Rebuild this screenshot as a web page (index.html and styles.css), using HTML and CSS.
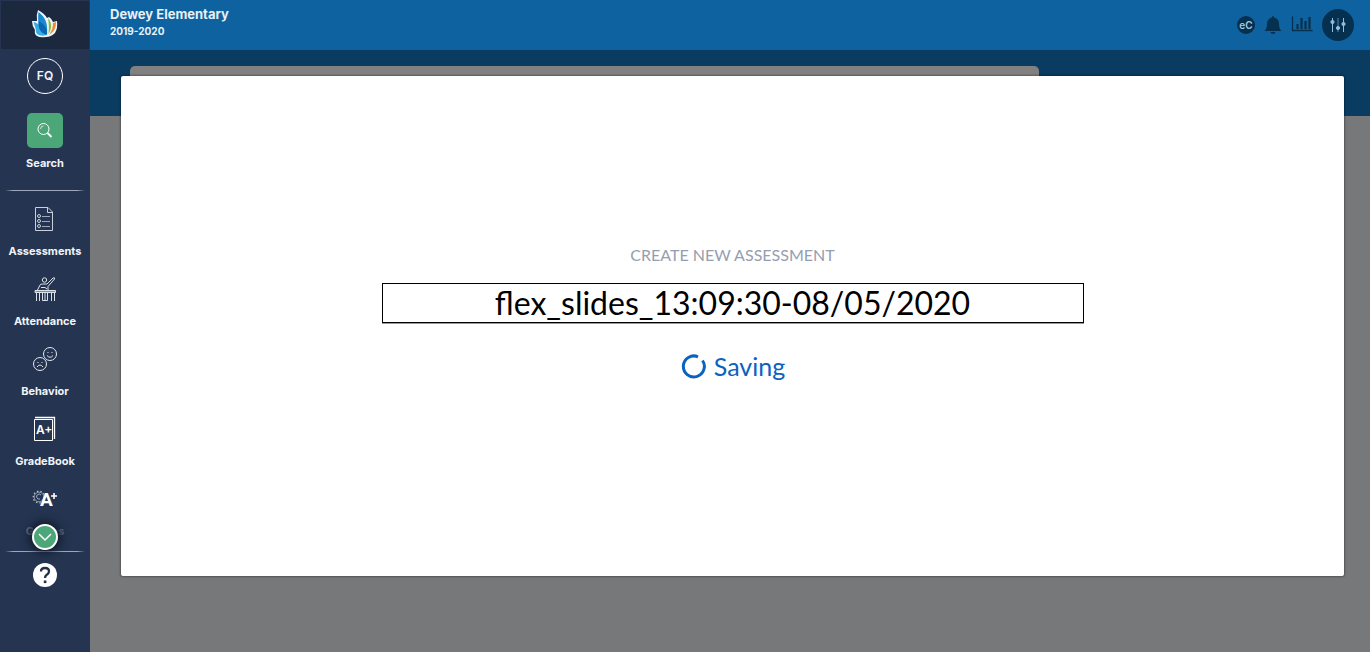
FILE: index.html
```html
<!DOCTYPE html>
<html lang="en">
<head>
<meta charset="utf-8">
<title>Create New Assessment</title>
<meta name="viewport" content="width=device-width, initial-scale=1">
<link rel="stylesheet" href="styles.css">
</head>
<body>
<aside class="sidebar">
  <a class="logo" href="#" aria-label="Home">
    <svg width="26" height="28" viewBox="0 0 26 28">
      <path d="M6 0Q12 3 15 8L17 7Q20 9 21 12L25 11Q26 18 23 23Q19 27 14 27Q8 28 5 26Q2 24 3 20Q0 16 0 11L5 11Q4 5 6 0Z" fill="#eef5fa"/>
      <path d="M6.500 2C13 7 16 13 15 24C8 21 5 13 6.500 2Z" fill="#1689d0"/>
      <path d="M1.500 12C8 14 13 18 14.500 25C8 27 3 24 4 20Z" fill="#35aee6"/>
      <path d="M6.500 11C12 14 16 19 15 25C8 23 6 18 6.500 11Z" fill="#0b65b2"/>
      <path d="M16 8C20 12 20 19 16.500 24C17 18 17 13 16 8Z" fill="#86bd40"/>
      <path d="M24 12C24 18 22 22 17 25C20 21 21 17 21 13Z" fill="#f18a32"/>
    </svg>
  </a>
  <button class="avatar" type="button">FQ</button>
  <button class="search" type="button">
    <span class="search-icon">
      <svg width="16" height="16" viewBox="0 0 16 16" fill="none" stroke="#fff"><circle cx="6.500" cy="6" r="5.500"/><path d="M3.500 6a3 3 0 0 1 3-3" stroke-width=".7"/><path d="M10.500 10L14.500 14" stroke-width="1.800"/></svg>
    </span>
    <span>Search</span>
  </button>
  <nav class="menu">
    <a class="item" href="#">
      <svg width="24" height="26" viewBox="0 0 24 26" fill="none" stroke="#c9d0db"><path d="M2.500 1.500H15L19.500 6V24.500H2.500Z M14.500 1.500V6.500H19.500"/><circle cx="6" cy="10" r="1.500"/><circle cx="6" cy="15" r="1.500"/><circle cx="6" cy="20" r="1.500"/><path d="M9 10.500H17M9 15.500H17M9 20.500H17" stroke="#9da8ba"/></svg>
      <span>Assessments</span>
    </a>
    <a class="item" href="#">
      <svg width="24" height="26" viewBox="0 0 24 26" fill="none" stroke="#dde2ea"><circle cx="11.500" cy="4" r="2.200"/><path d="M4.500 14L7 9Q7.500 8 9.500 8H14L20 2Q22 1 21.500 3L15 10.500V14M8 11.500H12L14 13"/><path d="M2 14.500H22.500V16.500H2Z" fill="#7f8ca3"/><path d="M3.500 17V25M6.500 17V25M18.500 17V25M21.500 17V25M9.500 17V24.500H14.500V17M12 17V24"/></svg>
      <span>Attendance</span>
    </a>
    <a class="item" href="#">
      <svg width="26" height="26" viewBox="0 0 26 26" fill="none" stroke="#e4e8ef"><circle cx="18" cy="8" r="6.500"/><circle cx="8" cy="18" r="6.500"/><path d="M15 9.500Q18 13 21 9.500M5 21Q8 17 11 21"/><path d="M15.500 6.500H16.500M19.500 6.500H20.500M5.500 16.500H6.500M9.500 16.500H10.500"/></svg>
      <span>Behavior</span>
    </a>
    <a class="item" href="#">
      <svg width="24" height="26" viewBox="0 0 24 26" fill="none" stroke="#fff"><path d="M1.500 3.500H19.500V24.500H1.500Z"/><path d="M2 1.500H21.500V23" stroke-width="1.300"/><text class="grade-mark" x="3" y="18">A+</text></svg>
      <span>GradeBook</span>
    </a>
    <a class="item" href="#">
      <svg width="26" height="26" viewBox="0 0 26 26" fill="none" stroke="#b3bdcc"><circle cx="7" cy="11" r="5.800" stroke-width="1.300" stroke-dasharray="1.500 2"/><circle cx="7" cy="11" r="4.800" stroke-width=".7"/><path d="M9 9A2.500 2.500 0 1 0 8 13" stroke-width=".9"/><text class="grades-mark" x="8" y="20">A</text><path d="M22 7V13M19 10H25" stroke="#fff" stroke-width="1.600"/></svg>
      <span class="faded">Grades</span>
    </a>
    <button class="more" type="button" aria-label="Show more">
      <svg width="16" height="10" viewBox="0 0 16 10" fill="none" stroke="#fff" stroke-width="1.500"><path d="M2 2L8 8L14 2"/></svg>
    </button>
  </nav>
  <a class="help" href="#" aria-label="Help">
    <svg width="24" height="24" viewBox="0 0 24 24"><circle cx="12" cy="12" r="12" fill="#fff"/><path d="M8 8.500Q8 5 12 5Q16 5 16 8.500Q16 10.500 13.500 12Q12 13 12 15" fill="none" stroke="#20304c" stroke-width="2.300"/><rect x="10.800" y="17.500" width="2.600" height="2.600" fill="#20304c"/></svg>
  </a>
</aside>
<div class="page">
  <header class="topbar">
    <div class="school"><div class="school-name">Dewey Elementary</div><div class="school-year">2019-2020</div></div>
    <div class="tools">
      <button class="ec" type="button">eC</button>
      <button type="button" aria-label="Notifications"><svg width="18" height="20" viewBox="0 0 18 20" fill="#06304f"><path d="M9 1Q10 1 10 2.500Q15 3.500 15 9Q15 14 17.500 16H.500Q3 14 3 9Q3 3.500 8 2.500Q8 1 9 1ZM6.500 17H11.500Q11 19 9 19Q7 19 6.500 17Z"/></svg></button>
      <button type="button" aria-label="Reports"><svg width="22" height="18" viewBox="0 0 22 18" fill="none" stroke="#06304f"><path d="M1.500 .500V14.500H21.500" stroke-width="1.300"/><path d="M6.500 13V8M10.500 13V2M14.500 13V5M18.500 13V1" stroke-width="2.200"/></svg></button>
      <button class="settings" type="button" aria-label="Settings"><svg width="16" height="16" viewBox="0 0 16 16" fill="#94bddb" stroke="#94bddb"><path d="M2.500 1V15M13.500 1V15"/><path d="M8 1V15" stroke="#345975" stroke-width="2"/><circle cx="2.500" cy="5" r="1.600"/><circle cx="8" cy="11" r="1.600"/><circle cx="13.500" cy="7" r="1.600"/></svg></button>
    </div>
  </header>
  <main class="content">
    <div class="band"><div class="card-top"></div></div>
    <section class="dialog" role="dialog" aria-labelledby="dialog-title">
      <label class="dialog-title" id="dialog-title" for="assessment-name">CREATE NEW ASSESSMENT</label>
      <input class="name" id="assessment-name" type="text" value="flex_slides_13:09:30-08/05/2020">
      <div class="status" role="status">
        <svg width="26" height="26" viewBox="0 0 26 26" fill="none" stroke="#0b62bf" stroke-width="3"><path d="M22.500 7.500A10.500 10.500 0 1 1 18 3.800"/></svg>
        <span>Saving</span>
      </div>
    </section>
  </main>
</div>
</body>
</html>
```
FILE: styles.css
```css
* { box-sizing: border-box; }
body {
  margin: 0;
  min-height: 100vh;
  display: flex;
  background: #777879;
  font-family: Inter, "Liberation Sans", sans-serif;
}
button { border: 0; padding: 0; background: none; color: inherit; font: inherit; }
a { color: inherit; text-decoration: none; }
svg { display: block; }

.sidebar {
  flex: 0 0 90px;
  display: flex;
  flex-direction: column;
  align-items: center;
  background: #253551;
  color: #f2f4f8;
  font-size: 11px;
  line-height: 14px;
  font-weight: 700;
}
.logo {
  align-self: stretch;
  height: 50px;
  display: flex;
  align-items: center;
  justify-content: center;
  padding-bottom: 2px;
  background: #1b283e;
  border: 1px solid #253551;
}
.avatar {
  width: 36px;
  height: 36px;
  margin-top: 8px;
  border: 1px solid #fff;
  border-radius: 50%;
  font-size: 12px;
  font-weight: 600;
}
.search {
  display: flex;
  flex-direction: column;
  align-items: center;
  gap: 8px;
  margin-top: 19px;
}
.search-icon {
  width: 36px;
  height: 35px;
  display: flex;
  align-items: center;
  justify-content: center;
  border-radius: 5px;
  background: #4ca778;
}
.menu {
  position: relative;
  align-self: stretch;
  display: flex;
  flex-direction: column;
  gap: 18px;
  margin-top: 20px;
  padding: 16px 0 14px;
  background:
    linear-gradient(90deg, transparent, #9ea8ba 10%, #9ea8ba 90%, transparent) center top / 80px 1px no-repeat,
    linear-gradient(90deg, transparent, #9ea8ba 10%, #9ea8ba 90%, transparent) center bottom / 80px 1px no-repeat;
}
.item {
  display: flex;
  flex-direction: column;
  align-items: center;
  gap: 12px;
}
.faded { color: #66728a; }
.grade-mark { fill: #fff; stroke: none; font-size: 12px; font-weight: 600; }
.grades-mark { fill: #fff; stroke: none; font-family: Roboto, sans-serif; font-size: 19px; font-weight: 700; }
.more {
  position: absolute;
  left: 50%;
  bottom: 2px;
  width: 26px;
  height: 26px;
  margin-left: -13px;
  display: flex;
  align-items: center;
  justify-content: center;
  border: 2px solid #fff;
  border-radius: 50%;
  background: #4ca778;
  box-shadow: 0 0 10px 3px #10192a;
}
.help { margin-top: 11px; }

.page { flex: 1; min-width: 0; display: flex; flex-direction: column; }
.topbar {
  height: 50px;
  display: flex;
  align-items: center;
  justify-content: space-between;
  padding: 0 16px 0 20px;
  background: #0e629f;
}
.school { color: #e6f0f7; font-weight: 700; padding-bottom: 4px; }
.school-name { font-size: 13px; line-height: 16px; }
.school-year { font-size: 10px; line-height: 18px; }
.tools { display: flex; align-items: center; gap: 9px; padding-bottom: 1px; }
.ec {
  width: 18px;
  height: 18px;
  border-radius: 50%;
  background: #06304f;
  color: #a5c7de;
  font-size: 10px;
  line-height: 18px;
  font-weight: 600;
}
.settings {
  width: 32px;
  height: 32px;
  display: flex;
  align-items: center;
  justify-content: center;
  border-radius: 50%;
  background: #06304f;
}
.content { position: relative; flex: 1; }
.band { height: 66px; padding: 16px 331px 0 40px; background: #0a3b61; }
.card-top { height: 50px; border-radius: 5px 5px 0 0; background: #818181; }
.dialog {
  position: absolute;
  top: 26px;
  left: 31px;
  right: 26px;
  display: flex;
  flex-direction: column;
  align-items: center;
  padding: 168px 24px 194px;
  border-radius: 2px;
  background: #fff;
  box-shadow: 0 0 2px 1px rgba(0, 0, 0, .3);
  font-family: Lato, "Open Sans", sans-serif;
}
.dialog-title { color: #959eb0; font-size: 16px; line-height: 22px; }
.name {
  width: 702px;
  max-width: 100%;
  height: 40px;
  margin-top: 17px;
  padding: 0 0 2px;
  border: 1px solid #000;
  box-shadow: 0 1px 0 #999;
  background: #fff;
  color: #000;
  font-family: inherit;
  font-size: 32px;
  text-align: center;
}
.status {
  display: flex;
  align-items: center;
  gap: 8px;
  margin-top: 27px;
  color: #0b62bf;
  font-size: 25px;
  line-height: 32px;
}
```
